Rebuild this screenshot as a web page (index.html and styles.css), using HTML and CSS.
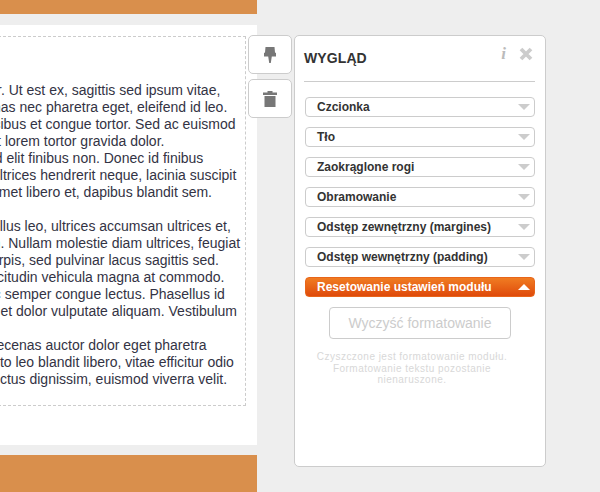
FILE: index.html
```html
<!DOCTYPE html>
<html lang="pl">
<head>
<meta charset="utf-8">
<title>Wygląd</title>
<link rel="stylesheet" href="styles.css">
</head>
<body>
<div class="page">
  <div class="canvas">
    <div class="bar bar-top"></div>
    <div class="sheet">
      <div class="module">
        <p class="para">
          <span class="ln l1">tortor. Ut est ex, sagittis sed ipsum vitae,</span>
          <span class="ln l2">Maecenas nec pharetra eget, eleifend id leo.</span>
          <span class="ln l3">faucibus et congue tortor. Sed ac euismod</span>
          <span class="ln l4">Ut lorem tortor gravida dolor.</span>
          <span class="ln l5">sed elit finibus non. Donec id finibus</span>
          <span class="ln l6">ultrices hendrerit neque, lacinia suscipit</span>
          <span class="ln l7">amet libero et, dapibus blandit sem.</span>
        </p>
        <p class="para">
          <span class="ln l8">Phasellus leo, ultrices accumsan ultrices et,</span>
          <span class="ln l9">nibh. Nullam molestie diam ultrices, feugiat</span>
          <span class="ln l10">turpis, sed pulvinar lacus sagittis sed.</span>
          <span class="ln l11">sollicitudin vehicula magna at commodo.</span>
          <span class="ln l12">ac semper congue lectus. Phasellus id</span>
          <span class="ln l13">amet dolor vulputate aliquam. Vestibulum</span>
        </p>
        <p class="para">
          <span class="ln l14">Maecenas auctor dolor eget pharetra</span>
          <span class="ln l15">justo leo blandit libero, vitae efficitur odio</span>
          <span class="ln l16">lectus dignissim, euismod viverra velit.</span>
        </p>
      </div>
    </div>
    <div class="bar bar-bottom"></div>
  </div>

  <div class="tools">
    <button class="tool" type="button" aria-label="Przypnij">
      <svg width="12" height="16" viewBox="0 0 12 16"><path class="ico" d="M1.5 0h9L11 5.5l1 .6v3.4H7.8L6.8 16H5.2L4.2 9.5H0V6.1l1-.6z"/></svg>
    </button>
    <button class="tool" type="button" aria-label="Usuń">
      <svg width="14" height="16" viewBox="0 0 14 16"><path class="ico" d="M4.5 0h5v1.5H14V4H0V1.5h4.5zM1.5 5h11v11h-11z"/></svg>
    </button>
  </div>

  <aside class="panel">
    <header class="head">
      <h2 class="title">WYGLĄD</h2>
      <span class="info">i</span>
      <svg class="close" width="14" height="14" viewBox="0 0 14 14"><path d="M2 2l10 10M12 2L2 12"/></svg>
    </header>
    <ul class="sections">
      <li class="sec">Czcionka<i class="arrow"></i></li>
      <li class="sec">Tło<i class="arrow"></i></li>
      <li class="sec">Zaokrąglone rogi<i class="arrow"></i></li>
      <li class="sec">Obramowanie<i class="arrow"></i></li>
      <li class="sec">Odstęp zewnętrzny (margines)<i class="arrow"></i></li>
      <li class="sec">Odstęp wewnętrzny (padding)<i class="arrow"></i></li>
      <li class="sec sec-open">Resetowanie ustawień modułu<i class="arrow"></i></li>
    </ul>
    <button class="clear" type="button">Wyczyść formatowanie</button>
    <p class="note">Czyszczone jest formatowanie modułu. Formatowanie tekstu pozostanie nienaruszone.</p>
  </aside>
</div>
</body>
</html>
```

FILE: styles.css
```css
* { box-sizing: border-box; }
html, body { margin: 0; padding: 0; }
body { background: #eeeeee; font-family: "Liberation Sans", Arial, sans-serif; overflow: hidden; }
.page { display: flex; align-items: flex-start; width: 600px; height: 492px; overflow: hidden; }

.canvas { flex: 0 0 257px; display: flex; flex-direction: column; height: 492px; overflow: hidden; }
.bar { background: #d98f4c; }
.bar-top { height: 14px; margin-bottom: 11px; }
.bar-bottom { height: 37px; margin-top: 10px; }
.sheet { height: 420px; background: #fff; padding-top: 11px; }

.module { width: 248px; height: 370px; margin-left: -2px; padding-top: 45px; border: 1px dashed #cccccc; overflow: hidden; }
.para { margin: 0 0 17px; color: #333344; font-size: 14px; line-height: 17px; }
.ln { display: block; white-space: nowrap; }
.l1 { margin-left: -30px; }
.l2 { margin-left: -48px; }
.l3 { margin-left: -25px; }
.l4 { margin-left: -12px; }
.l5 { margin-left: -19px; }
.l6 { margin-left: -7px; }
.l7 { margin-left: -8px; }
.l8 { margin-left: -39px; }
.l9 { margin-left: -25px; }
.l10 { margin-left: -12px; }
.l11 { margin-left: -26px; }
.l12 { margin-left: -13px; }
.l13 { margin-left: -18px; }
.l14 { margin-left: -22px; }
.l15 { margin-left: -17px; }
.l16 { margin-left: -10px; }

.tools { flex: 0 0 44px; margin: 35px 0 0 -9px; display: flex; flex-direction: column; gap: 5px; position: relative; }
.tool { width: 44px; height: 39px; padding: 0; display: flex; align-items: center; justify-content: center; background: #fff; border: 1px solid #cccccc; border-radius: 5px; }
.ico { fill: #777777; }

.panel { flex: 0 0 252px; height: 432px; margin: 35px 0 0 2px; padding: 0 10px 0 9px; background: #fff; border: 1px solid #cccccc; border-radius: 5px; }
.head { display: flex; align-items: center; height: 46px; padding-bottom: 2px; border-bottom: 1px solid #cccccc; margin: 0 0 15px; }
.title { flex: 1; margin: 0; font-size: 14px; font-weight: bold; color: #333333; letter-spacing: .1px; }
.info { margin: 0 13px 7px 0; font: italic bold 17px/14px "Liberation Serif", serif; color: #bbbbbb; }
.close { margin: 0 2px 7px 0; }
.close path { fill: none; stroke: #cccccc; stroke-width: 3.8; }

.sections { list-style: none; margin: 0; padding: 0 0 0 1px; display: flex; flex-direction: column; gap: 10px; }
.sec { position: relative; height: 20px; padding-left: 11px; background: #fff; border: 1px solid #cccccc; border-radius: 4px; color: #333333; font-size: 12px; font-weight: bold; line-height: 18px; }
.arrow { position: absolute; right: 4px; top: 6px; width: 0; height: 0; border-left: 6px solid transparent; border-right: 6px solid transparent; border-top: 6px solid #cccccc; }
.sec-open { background: linear-gradient(#f07c22, #df4a0b); border-color: #e8651a; color: #fff; }
.sec-open .arrow { border-top: 0; border-bottom: 6px solid #fff; }

.clear { display: block; width: 182px; height: 32px; margin: 10px 0 0 25px; padding: 0; background: #fff; border: 1px solid #cccccc; border-radius: 4px; color: #cccccc; font: 14px "Liberation Sans", Arial, sans-serif; }
.note { margin: 12px 0 0; padding: 0 15px 0 0; color: #d8d8d8; font-size: 10px; line-height: 11.5px; letter-spacing: .47px; text-align: center; }
```
